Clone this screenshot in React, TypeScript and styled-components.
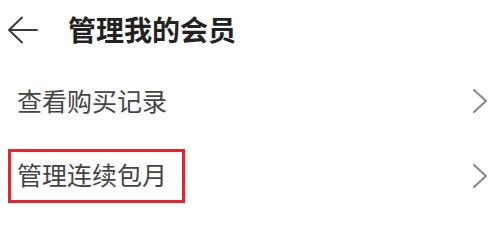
import styled, { createGlobalStyle } from "styled-components"

const Global = createGlobalStyle`
  body {
    margin: 0;
    background: #fff;
    font-family: "Noto Sans CJK SC", "Noto Sans", sans-serif;
  }
`

const Page = styled.div`
  width: 500px;
  height: 247px;
  background: #fff;
`

const Header = styled.div`
  display: flex;
  align-items: center;
  height: 57px;
  padding-left: 7px;
`

const BackBtn = styled.div`
  width: 31px;
  height: 28px;
  display: flex;
  align-items: center;
  margin: 3px 30px 0 0;
`

const Title = styled.h1`
  margin: 0;
  font-size: 28px;
  font-weight: 700;
  color: #222;
  line-height: 1;
`

const List = styled.div`
  padding-top: 6px;
`

const Row = styled.div`
  display: flex;
  align-items: center;
  justify-content: space-between;
  height: 75px;
  padding: 0 12px 0 17px;
`

const Label = styled.span<{ $marked?: boolean }>`
  font-size: 25px;
  color: #444;
  line-height: 25px;
  ${(p) =>
    p.$marked &&
    `
    margin-left: -9px;
    padding: 10px 15px 13px 6px;
    border: 3px solid #e8242a;
  `}
`

const Chevron = () => (
  <svg width="16" height="26" viewBox="0 0 16 26">
    <polyline points="2,2 14,13 2,24" fill="none" stroke="#8a8a8a" strokeWidth="2.2" strokeLinecap="round" strokeLinejoin="round" />
  </svg>
)

const App = () => (
  <Page>
    <Global />
    <Header>
      <BackBtn>
        <svg width="31" height="28" viewBox="0 0 31 28">
          <path d="M30 14H2.5M15 1.5L2 14l13 12.5" fill="none" stroke="#3a3a3a" strokeWidth="2" strokeLinecap="round" strokeLinejoin="round" />
        </svg>
      </BackBtn>
      <Title>管理我的会员</Title>
    </Header>
    <List>
      <Row>
        <Label>查看购买记录</Label>
        <Chevron />
      </Row>
      <Row>
        <Label $marked>管理连续包月</Label>
        <Chevron />
      </Row>
    </List>
  </Page>
)

export default App
